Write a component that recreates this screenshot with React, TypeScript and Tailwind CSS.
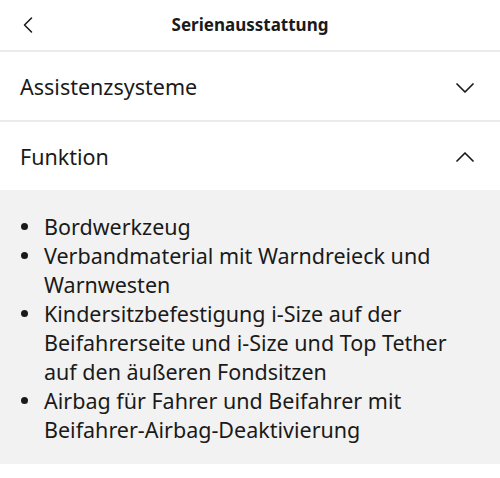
import { ChevronDown, ChevronLeft, ChevronUp } from "lucide-react";

const items = [
  "Bordwerkzeug",
  "Verbandmaterial mit Warndreieck und Warnwesten",
  "Kindersitzbefestigung i-Size auf der Beifahrerseite und i-Size und Top Tether auf den äußeren Fondsitzen",
  "Airbag für Fahrer und Beifahrer mit Beifahrer-Airbag-Deaktivierung",
];

export default function App() {
  return (
    <div className="w-[500px] h-[478px] bg-white text-[#1a1a1a] font-['Noto_Sans',sans-serif]">
      <div className="relative flex h-[52px] items-center justify-center border-b-2 border-[#ebebeb]">
        <ChevronLeft
          className="absolute left-[14px] top-[11px] h-[28px] w-[28px]"
          strokeWidth={1.3}
          absoluteStrokeWidth
        />
        <span className="text-[17px] font-bold">Serienausstattung</span>
      </div>
      <div className="flex h-[70px] items-center justify-between border-b-2 border-[#ebebeb] pl-5 pr-[19px] pt-[3px]">
        <span className="text-[21.5px]">Assistenzsysteme</span>
        <ChevronDown className="h-[32px] w-[32px]" strokeWidth={1.3} absoluteStrokeWidth />
      </div>
      <div className="flex h-[68px] items-center justify-between pl-5 pr-[19px] pt-[2px]">
        <span className="text-[21.5px]">Funktion</span>
        <ChevronUp className="h-[32px] w-[32px]" strokeWidth={1.3} absoluteStrokeWidth />
      </div>
      <ul className="bg-[#f2f2f2] pb-[20px] pl-[44px] pr-[30px] pt-[22px] text-[21.5px] leading-[29px]">
        {items.map((t) => (
          <li key={t} className="relative">
            <span className="absolute left-[-23px] top-[11px] h-[7px] w-[7px] rounded-full bg-[#1a1a1a]" />
            {t}
          </li>
        ))}
      </ul>
    </div>
  );
}
